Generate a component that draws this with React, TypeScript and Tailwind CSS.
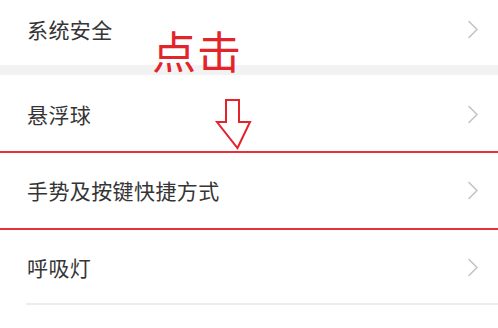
import React from "react";

const font = { fontFamily: '"Noto Sans CJK SC", "Noto Sans", sans-serif' };

function Chevron() {
  return (
    <svg width="12" height="19" viewBox="0 0 12 19" className="shrink-0">
      <path d="M2 1.5 L10 9.5 L2 17.5" fill="none" stroke="#c4c4c4" strokeWidth="1.6" strokeLinecap="round" strokeLinejoin="round" />
    </svg>
  );
}

function Row({ label, className }: { label: string; className: string }) {
  return (
    <div className={`flex items-center justify-between pl-[27px] pr-[19px] ${className}`}>
      <span className="text-[21px] leading-none text-[#353535] tracking-[0.4px]">{label}</span>
      <Chevron />
    </div>
  );
}

export default function App() {
  return (
    <div className="relative w-[498px] h-[328px] bg-white overflow-hidden" style={font}>
      <Row label="系统安全" className="h-[65px] pb-[7px]" />
      <div className="h-[10px] bg-[#f2f2f2]" />
      <Row label="悬浮球" className="h-[76px] pt-[2px]" />
      <Row label="手势及按键快捷方式" className="h-[79px] border-y-2 border-[#e8303a]" />
      <Row label="呼吸灯" className="h-[73px] pt-[1px]" />
      <div className="ml-[26px] h-[2px] bg-[#ededed]" />

      <div
        className="absolute left-[152px] top-[28px] text-[44px] leading-none text-[#e3242b] tracking-[1px]"
        style={{ fontFamily: '"Noto Sans CJK SC", serif', fontWeight: 400 }}
      >
        点击
      </div>
      <svg className="absolute left-[214px] top-[98px]" width="40" height="54" viewBox="0 0 40 54">
        <path
          d="M12 2 H25 V24 H36 L23.5 50 L3 24 H12 Z"
          fill="white"
          stroke="#e3242b"
          strokeWidth="2"
          strokeLinejoin="miter"
        />
      </svg>
    </div>
  );
}
